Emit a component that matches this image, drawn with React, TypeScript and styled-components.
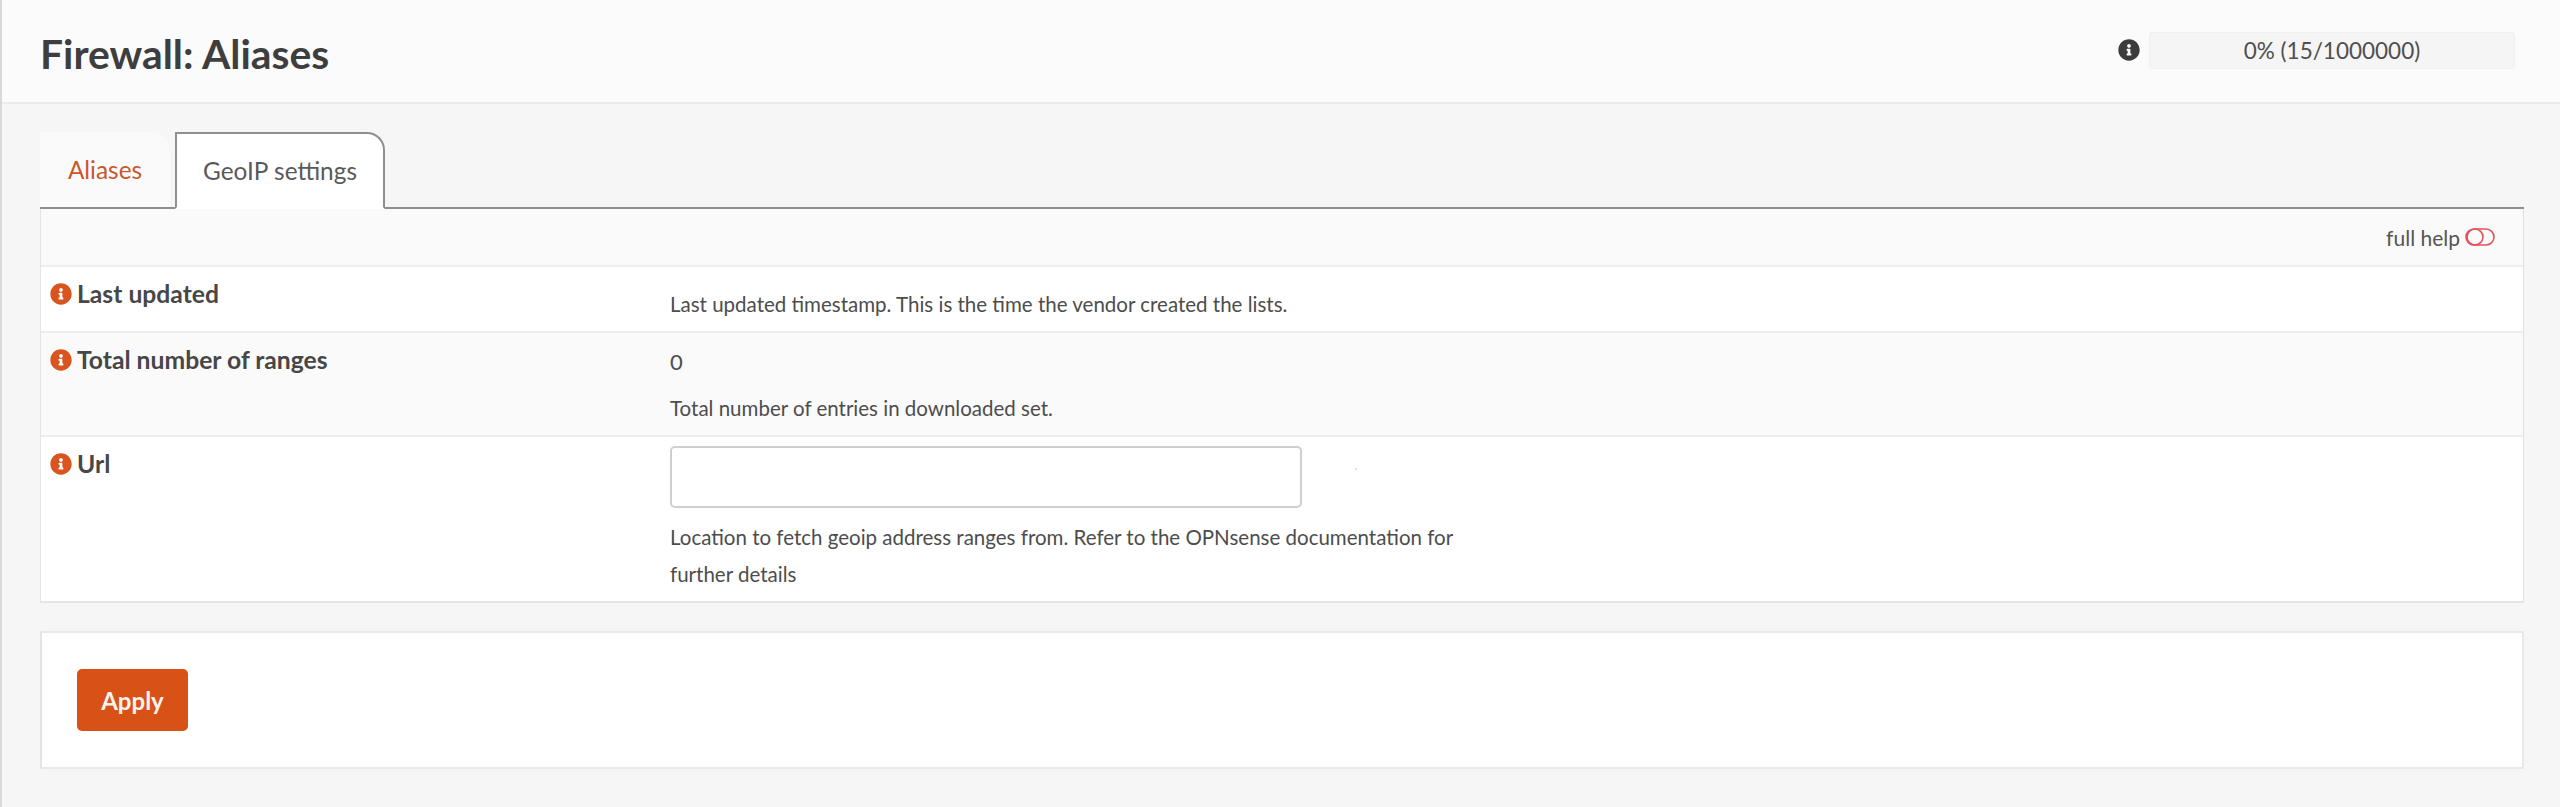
import styled, { createGlobalStyle } from 'styled-components';
import { FaInfoCircle } from 'react-icons/fa';

const Global = createGlobalStyle`
  html, body { margin: 0; padding: 0; background: #f6f6f6; }
  body { font-family: Lato, "Open Sans", "Liberation Sans", sans-serif; color: #4a4a4a; }
`;

const Page = styled.div`
  width: 2560px;
  height: 807px;
  box-sizing: border-box;
  border-left: 2px solid #d9d9d9;
  background: #f6f6f6;
  overflow: hidden;
`;

const Header = styled.header`
  height: 104px;
  box-sizing: border-box;
  background: #fbfbfb;
  border-bottom: 2px solid #ebebeb;
  display: flex;
  align-items: center;
  justify-content: space-between;
  padding: 0 45px 2px 38px;
`;

const Title = styled.h1`
  margin: 6px 0 0;
  font-size: 40.8px;
  font-weight: 700;
  color: #3e3e3e;
`;

const Usage = styled.div`
  display: flex;
  align-items: center;
  gap: 9px;
  color: #3c3c3c;
`;

const Meter = styled.div`
  width: 366px;
  height: 37px;
  box-sizing: border-box;
  border: 1px solid #efefef;
  border-radius: 4px;
  background: #f5f5f5;
  color: #4f4f4f;
  font-size: 22.5px;
  line-height: 36px;
  text-align: center;
`;

const Content = styled.main`
  padding: 28px 36px 0 38px;
`;

const Tabs = styled.nav`
  display: flex;
  align-items: flex-end;
  height: 75px;
  gap: 5px;
  border-bottom: 2px solid #8f8f8f;
`;

const Tab = styled.div<{ $active?: boolean }>`
  width: ${p => (p.$active ? '210px' : '130px')};
  height: ${p => (p.$active ? '77px' : '75px')};
  margin-bottom: ${p => (p.$active ? '-2px' : '0')};
  box-sizing: border-box;
  border-radius: 0 18px 0 0;
  display: flex;
  align-items: center;
  justify-content: center;
  font-size: 24.4px;
  background: ${p => (p.$active ? '#ffffff' : '#fafafa')};
  color: ${p => (p.$active ? '#5a5a5a' : '#c9582a')};
  border: ${p => (p.$active ? '2px solid #8f8f8f' : '0')};
  border-bottom: ${p => (p.$active ? '2px solid #ffffff' : '0')};
`;

const Table = styled.section`
  background: #ffffff;
  border-left: 1px solid #e4e4e4;
  border-right: 1px solid #e0e0e0;
  border-bottom: 2px solid #e6e6e6;
`;

const HelpBar = styled.div`
  height: 56px;
  background: #fafafa;
  display: flex;
  align-items: center;
  justify-content: flex-end;
  gap: 5px;
  padding-right: 28px;
  font-size: 21px;
  color: #555555;
  border-bottom: 2px solid #ededed;
`;

const Row = styled.div<{ $height: number; $shaded?: boolean; $last?: boolean }>`
  height: ${p => p.$height}px;
  box-sizing: border-box;
  display: grid;
  grid-template-columns: 629px 1fr;
  background: ${p => (p.$shaded ? '#fafafa' : '#ffffff')};
  border-bottom: ${p => (p.$last ? '0' : '2px solid #ededed')};
`;

const Label = styled.div`
  display: flex;
  align-items: center;
  align-self: start;
  gap: 5px;
  padding: 12px 0 0 9px;
  font-size: 24.7px;
  font-weight: 700;
  color: #474747;
  svg { color: #d9541e; flex: none; }
`;

const Value = styled.div<{ $top: number }>`
  position: relative;
  padding-top: ${p => p.$top}px;
  color: #4d4d4d;
`;

const Help = styled.div`
  font-size: 20.5px;
  line-height: 37px;
  max-width: 810px;
  color: #4d4d4d;
`;

const Amount = styled.div`
  font-size: 22px;
  line-height: 30px;
  margin-bottom: 13px;
`;

const Input = styled.input`
  display: block;
  width: 632px;
  height: 62px;
  box-sizing: border-box;
  border: 2px solid #cfcfcf;
  border-radius: 5px;
  background: #ffffff;
  margin-bottom: 11px;
`;

// faint leftover speck next to the input (hidden loader in the real page)
const Speck = styled.span`
  position: absolute;
  top: 31px;
  left: 685px;
  width: 2px;
  height: 2px;
  background: #e4e4e4;
`;

const ActionPanel = styled.section`
  margin-top: 28px;
  height: 138px;
  box-sizing: border-box;
  background: #ffffff;
  border: 2px solid #e9e9e9;
  border-left-color: #e4e4e4;
  display: flex;
  align-items: center;
  padding-left: 35px;
`;

const ApplyButton = styled.button`
  width: 111px;
  height: 62px;
  border: 0;
  border-radius: 5px;
  background: #d85218;
  color: #fdf4ee;
  font-family: inherit;
  font-size: 24px;
  font-weight: 700;
`;

const ToggleIcon = () => (
  <svg width="30" height="20" viewBox="0 0 30 20" fill="none" stroke="#e2525c" strokeWidth="1.6">
    <rect x="1" y="2" width="28" height="16" rx="8" />
    <circle cx="10" cy="10" r="8" />
  </svg>
);

export default function App() {
  return (
    <Page>
      <Global />
      <Header>
        <Title>Firewall: Aliases</Title>
        <Usage>
          <FaInfoCircle size={22} />
          <Meter>0% (15/1000000)</Meter>
        </Usage>
      </Header>
      <Content>
        <Tabs>
          <Tab>Aliases</Tab>
          <Tab $active>GeoIP settings</Tab>
        </Tabs>
        <Table>
          <HelpBar>
            full help
            <ToggleIcon />
          </HelpBar>
          <Row $height={66}>
            <Label>
              <FaInfoCircle size={22} />
              Last updated
            </Label>
            <Value $top={19}>
              <Help>Last updated timestamp. This is the time the vendor created the lists.</Help>
            </Value>
          </Row>
          <Row $height={104} $shaded>
            <Label>
              <FaInfoCircle size={22} />
              Total number of ranges
            </Label>
            <Value $top={14}>
              <Amount>0</Amount>
              <Help>Total number of entries in downloaded set.</Help>
            </Value>
          </Row>
          <Row $height={164} $last>
            <Label>
              <FaInfoCircle size={22} />
              Url
            </Label>
            <Value $top={9}>
              <Input />
              <Speck />
              <Help>Location to fetch geoip address ranges from. Refer to the OPNsense documentation for further details</Help>
            </Value>
          </Row>
        </Table>
        <ActionPanel>
          <ApplyButton>Apply</ApplyButton>
        </ActionPanel>
      </Content>
    </Page>
  );
}
